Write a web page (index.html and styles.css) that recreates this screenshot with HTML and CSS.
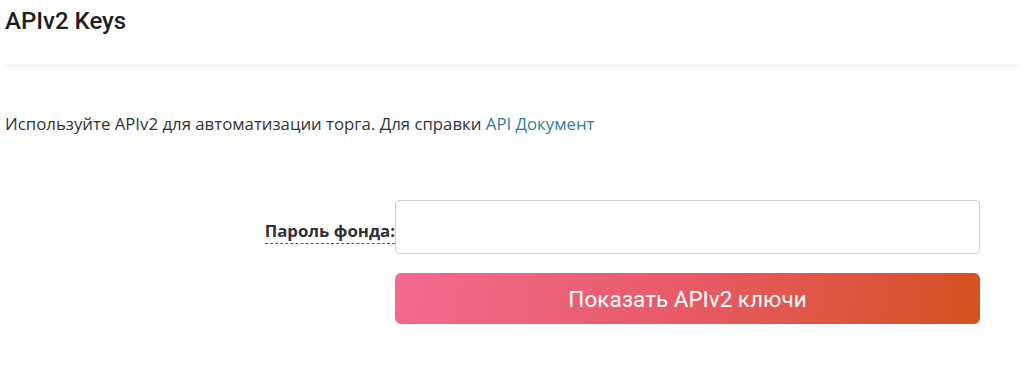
FILE: index.html
```html
<!DOCTYPE html>
<html lang="ru">
<head>
<meta charset="utf-8">
<title>APIv2 Keys</title>
<link rel="stylesheet" href="styles.css">
</head>
<body>
<div class="page">
  <h1 class="title">APIv2 Keys</h1>
  <div class="divider"></div>
  <p class="intro">Используйте APIv2 для автоматизации торга. Для справки <a class="link" href="#">API Документ</a></p>
  <form class="form">
    <div class="row">
      <label class="label" for="pwd"><span class="label-text">Пароль фонда:</span></label>
      <input class="input" id="pwd" type="password">
    </div>
    <div class="row">
      <span></span>
      <button class="btn" type="button">Показать APIv2 ключи</button>
    </div>
  </form>
</div>
</body>
</html>
```

FILE: styles.css
```css
html, body {
  margin: 0;
  padding: 0;
  background: #ffffff;
}
.page {
  width: 1024px;
  height: 381px;
  padding: 0 4px 0 5px;
  box-sizing: border-box;
  font-family: "Open Sans", "Noto Sans", sans-serif;
  color: #333333;
}
.title {
  margin: 0;
  padding-top: 6px;
  font-family: Roboto, "Liberation Sans", sans-serif;
  font-weight: 500;
  font-size: 24px;
  line-height: 30px;
  color: #1e1e22;
}
.divider {
  margin-top: 29px;
  height: 1px;
  background: #eeeeee;
}
.intro {
  margin: 46px 0 0;
  font-size: 16.8px;
  line-height: 24px;
  color: #333333;
}
.link {
  color: #2e7d9e;
  text-decoration: none;
}
.form {
  margin-top: 64px;
  display: flex;
  flex-direction: column;
  gap: 19px;
}
.row {
  display: grid;
  grid-template-columns: 390px 585px;
  align-items: center;
}
.label {
  justify-self: end;
  font-weight: 700;
  font-size: 16.8px;
  color: #2f2f36;
  padding-top: 9px;
}
.label-text {
  display: inline-block;
  line-height: 22px;
  border-bottom: 1px dashed #555555;
  padding-bottom: 1px;
}
.input {
  width: 585px;
  height: 54px;
  box-sizing: border-box;
  border: 1px solid #cfcfcf;
  border-radius: 4px;
  background: #ffffff;
  margin: 0;
  padding: 0 12px;
  font-size: 15px;
}
.btn {
  width: 585px;
  height: 51px;
  border: 0;
  border-radius: 6px;
  background: linear-gradient(100deg, #f4698e 0%, #e85a66 50%, #d6511f 100%);
  color: #ffffff;
  font-family: Roboto, "Liberation Sans", sans-serif;
  font-size: 22.5px;
  font-weight: 400;
  cursor: pointer;
  padding: 0;
}
```
